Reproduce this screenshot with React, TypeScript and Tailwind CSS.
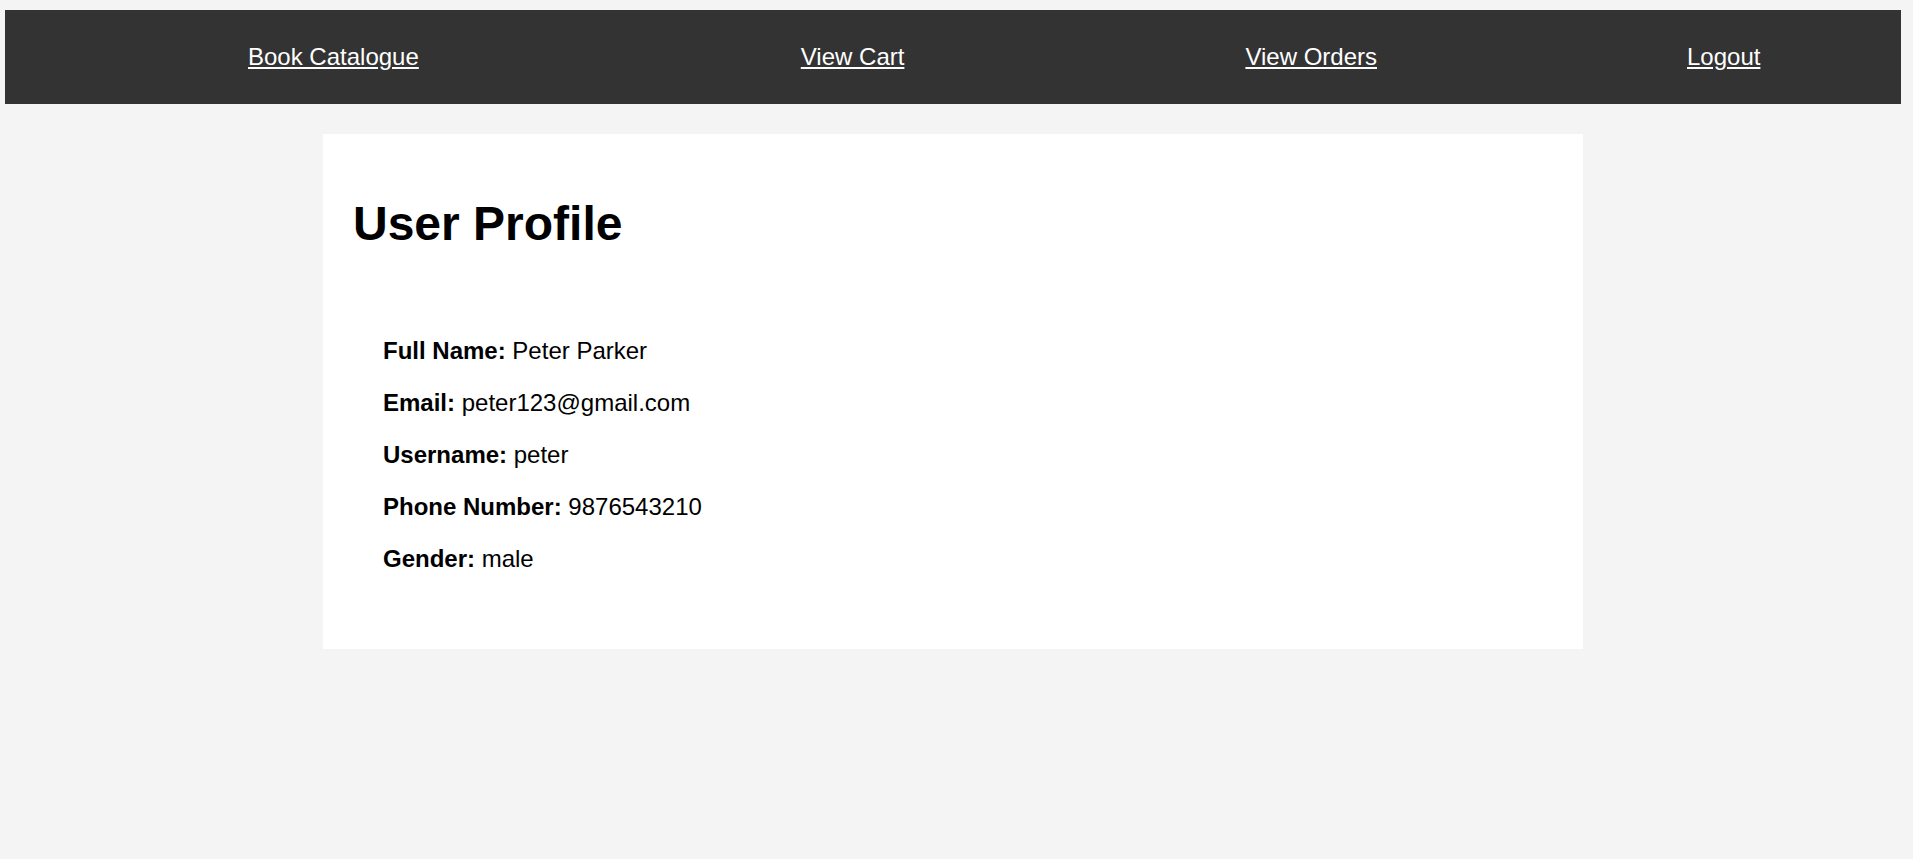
const navLinks = [
  { label: "Book Catalogue", gap: "ml-[243px]" },
  { label: "View Cart", gap: "ml-[382px]" },
  { label: "View Orders", gap: "ml-[341px]" },
  { label: "Logout", gap: "ml-[310px]" },
];

const profile = [
  { label: "Full Name:", value: "Peter Parker" },
  { label: "Email:", value: "peter123@gmail.com" },
  { label: "Username:", value: "peter" },
  { label: "Phone Number:", value: "9876543210" },
  { label: "Gender:", value: "male" },
];

export default function App() {
  return (
    <div className="min-h-screen bg-[#f4f4f4] pr-[7px] pt-[10px] font-['Liberation_Sans',Arial,sans-serif] text-black">
      <nav className="ml-[5px] mr-[5px] flex h-[94px] items-center bg-[#333333]">
        {navLinks.map((link) => (
          <a
            key={link.label}
            href="#"
            className={`${link.gap} text-[24px] leading-[1.15] text-white underline`}
          >
            {link.label}
          </a>
        ))}
      </nav>

      <main className="mx-auto mt-[30px] w-[1260px] bg-white pl-[30px] pr-[29px] pt-[62px] pb-[76px]">
        <h1 className="text-[48px] font-bold leading-[1.15]">User Profile</h1>

        <div className="mt-[86px] flex flex-col gap-[24px] pl-[30px]">
          {profile.map((item) => (
            <p key={item.label} className="text-[24px] leading-[28px]">
              <strong className="font-bold">{item.label}</strong> {item.value}
            </p>
          ))}
        </div>
      </main>
    </div>
  );
}
